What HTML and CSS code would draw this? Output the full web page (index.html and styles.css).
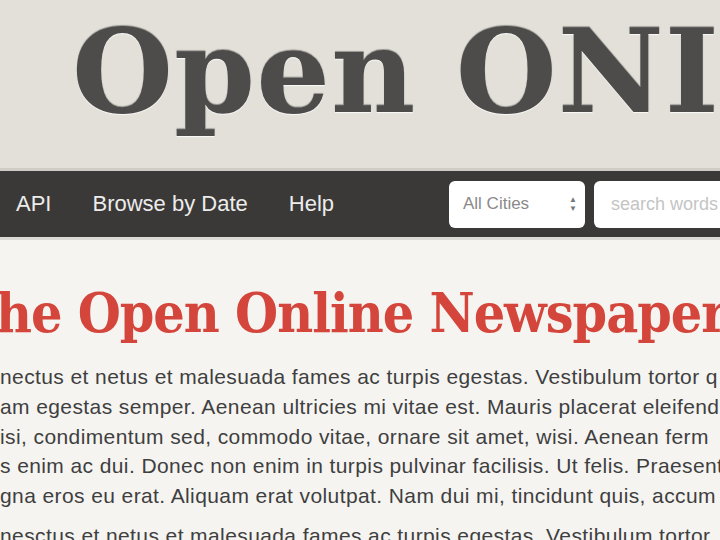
FILE: index.html
```html
<!DOCTYPE html>
<html>
<head>
<meta charset="utf-8">
<link rel="stylesheet" href="styles.css">
</head>
<body>
<header class="masthead">
  <h1 class="site-title">Open ONI</h1>
</header>
<nav class="navbar">
  <ul class="nav-links">
    <li><a href="#">API</a></li>
    <li><a href="#">Browse by Date</a></li>
    <li><a href="#">Help</a></li>
  </ul>
  <form class="search">
    <div class="select"><span>All Cities</span><span class="arrows">&#9650;<br>&#9660;</span></div>
    <div class="input"><span>search words</span></div>
  </form>
</nav>
<main class="content">
  <h2 class="headline">he Open Online Newspaper</h2>
  <p class="lorem">nectus et netus et malesuada fames ac turpis egestas. Vestibulum tortor q<br>am egestas semper. Aenean ultricies mi vitae est. Mauris placerat eleifend<br>isi, condimentum sed, commodo vitae, ornare sit amet, wisi. Aenean ferm<br>s enim ac dui. Donec non enim in turpis pulvinar facilisis. Ut felis. Praesent<br>gna eros eu erat. Aliquam erat volutpat. Nam dui mi, tincidunt quis, accum</p>
  <p class="lorem">nesctus et netus et malesuada fames ac turpis egestas. Vestibulum tortor</p>
</main>
</body>
</html>
```
FILE: styles.css
```css
html, body {
  margin: 0;
  padding: 0;
  background: #f5f4f1;
  overflow: hidden;
}
.masthead {
  background: #e3e0d9;
  height: 168px;
  border-bottom: 3px solid #cfccc5;
  overflow: hidden;
}
.site-title {
  margin: 0;
  padding: 13px 0 0 72px;
  font-family: "DejaVu Serif", serif;
  font-weight: bold;
  font-size: 116px;
  line-height: 1;
  letter-spacing: 1px;
  word-spacing: -2px;
  color: #4d4c4b;
  white-space: nowrap;
  text-shadow: 0 1px 1px rgba(255,255,255,0.8), 0 -1px 1px rgba(0,0,0,0.35);
}
.navbar {
  background: #3b3937;
  height: 66px;
  display: flex;
  align-items: center;
  border-bottom: 3px solid #dcdad5;
  overflow: hidden;
}
.nav-links {
  list-style: none;
  margin: 0;
  padding: 0 0 0 16px;
  display: flex;
  gap: 41px;
}
.nav-links a {
  color: #ececec;
  text-decoration: none;
  font-family: "Liberation Sans", Arial, sans-serif;
  font-size: 22px;
}
.search {
  margin-left: auto;
  margin-right: -40px;
  display: flex;
  gap: 9px;
  flex: 0 0 311px;
}
.select, .input {
  background: #ffffff;
  height: 47px;
  border-radius: 6px;
  display: flex;
  align-items: center;
  font-family: "Liberation Sans", Arial, sans-serif;
  box-sizing: border-box;
}
.select {
  flex: 0 0 136px;
  padding: 0 8px 0 14px;
  font-size: 17px;
  color: #8a8a8a;
  justify-content: space-between;
}
.arrows {
  font-size: 8px;
  line-height: 9px;
  color: #777;
  text-align: center;
}
.input {
  flex: 0 0 166px;
  padding-left: 17px;
  font-size: 18px;
  color: #c4c4c4;
  white-space: nowrap;
}
.content {
  padding-top: 45px;
}
.headline {
  margin: 0 0 22px -4px;
  font-family: "DejaVu Serif", serif;
  font-stretch: condensed;
  font-weight: bold;
  font-size: 55px;
  letter-spacing: -1px;
  line-height: 1;
  color: #d4463b;
  white-space: nowrap;
}
.lorem {
  margin: 0 0 10px 0;
  font-family: "Liberation Sans", Arial, sans-serif;
  font-size: 21px;
  letter-spacing: 0.4px;
  line-height: 29.8px;
  color: #3f3f3f;
  white-space: nowrap;
}
```
